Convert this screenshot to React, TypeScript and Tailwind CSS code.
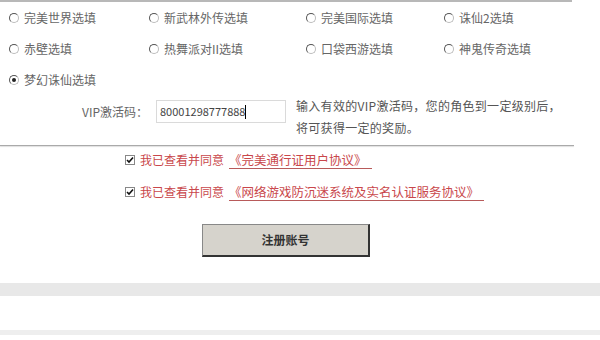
import React from "react";

const FONT = { fontFamily: '"Noto Sans CJK SC", "Noto Sans", sans-serif' };

const GAMES: { name: string; checked?: boolean }[] = [
  { name: "完美世界选填" },
  { name: "新武林外传选填" },
  { name: "完美国际选填" },
  { name: "诛仙2选填" },
  { name: "赤壁选填" },
  { name: "热舞派对II选填" },
  { name: "口袋西游选填" },
  { name: "神鬼传奇选填" },
  { name: "梦幻诛仙选填", checked: true },
];

const Radio = ({ checked }: { checked?: boolean }) => (
  <span className="relative inline-block w-[10px] h-[10px] rounded-full border border-[#bbb] border-t-[#555] border-l-[#555] bg-white shrink-0">
    {checked && <span className="absolute left-[2px] top-[2px] w-[4px] h-[4px] rounded-full bg-[#222]" />}
  </span>
);

const Checkbox = () => (
  <span className="inline-flex items-center justify-center w-[10px] h-[10px] border border-[#888] bg-white shrink-0">
    <svg width="8" height="8" viewBox="0 0 8 8">
      <path d="M1 4 L3 6 L7 1.5" stroke="#111" strokeWidth="1.6" fill="none" />
    </svg>
  </span>
);

const Agree = ({ doc }: { doc: string }) => (
  <div className="flex items-center h-[24px] pl-[125px] gap-[5px]">
    <Checkbox />
    <span className="text-[12px] text-[#c9474b]">我已查看并同意</span>
    <span className="text-[12.5px] text-[#c9474b] border-b border-[#b85a5a] leading-[16px] pr-[5px]">{doc}</span>
  </div>
);

export default function App() {
  return (
    <div className="w-[600px] h-[340px] bg-white overflow-hidden" style={FONT}>
      <div className="h-[2px] w-[572px] bg-[#b8b8b8]" />

      <div className="grid grid-cols-[140px_157px_138px_1fr] pl-[9px]">
        {GAMES.map((g) => (
          <label key={g.name} className="flex items-center h-[31px] gap-[5px] text-[12px] text-[#666]">
            <Radio checked={g.checked} />
            <span>{g.name}</span>
          </label>
        ))}
      </div>

      <div className="flex items-start">
        <div className="flex items-center mt-[5px]">
          <span className="w-[150px] text-right pr-[2px] text-[12px] leading-[23px] text-[#666]">VIP激活码：</span>
          <div className="ml-[6px] w-[130px] h-[23px] border border-[#dadada] flex items-center pl-[3px] text-[11px] text-[#444]">
            80001298777888
            <span className="w-px h-[14px] bg-black" />
          </div>
        </div>
        <div className="ml-[10px] text-[12px] leading-[22px] text-[#555] tracking-[0.3px]">
          <div>输入有效的VIP激活码，您的角色到一定级别后，</div>
          <div>将可获得一定的奖励。</div>
        </div>
      </div>

      <div className="mt-[6px] w-[574px] h-px bg-[#aaa] shadow-[0_1px_1px_#ddd]" />

      <div className="flex flex-col gap-[8px] pt-[2px]">
        <Agree doc="《完美通行证用户协议》" />
        <Agree doc="《网络游戏防沉迷系统及实名认证服务协议》" />
      </div>

      <div className="mt-[20px] ml-[202px] w-[168px] h-[33px] bg-[#d6d3cc] border border-[#888] border-r-[#333] border-b-[#333] border-r-2 border-b-2 flex items-center justify-center text-[12px] font-bold text-[#333]">
        注册账号
      </div>

      <div className="mt-[26px] h-[13px] bg-[#e8e8e8]" />
      <div className="mt-[34px] h-[5px] bg-[#eeeeee]" />
    </div>
  );
}
